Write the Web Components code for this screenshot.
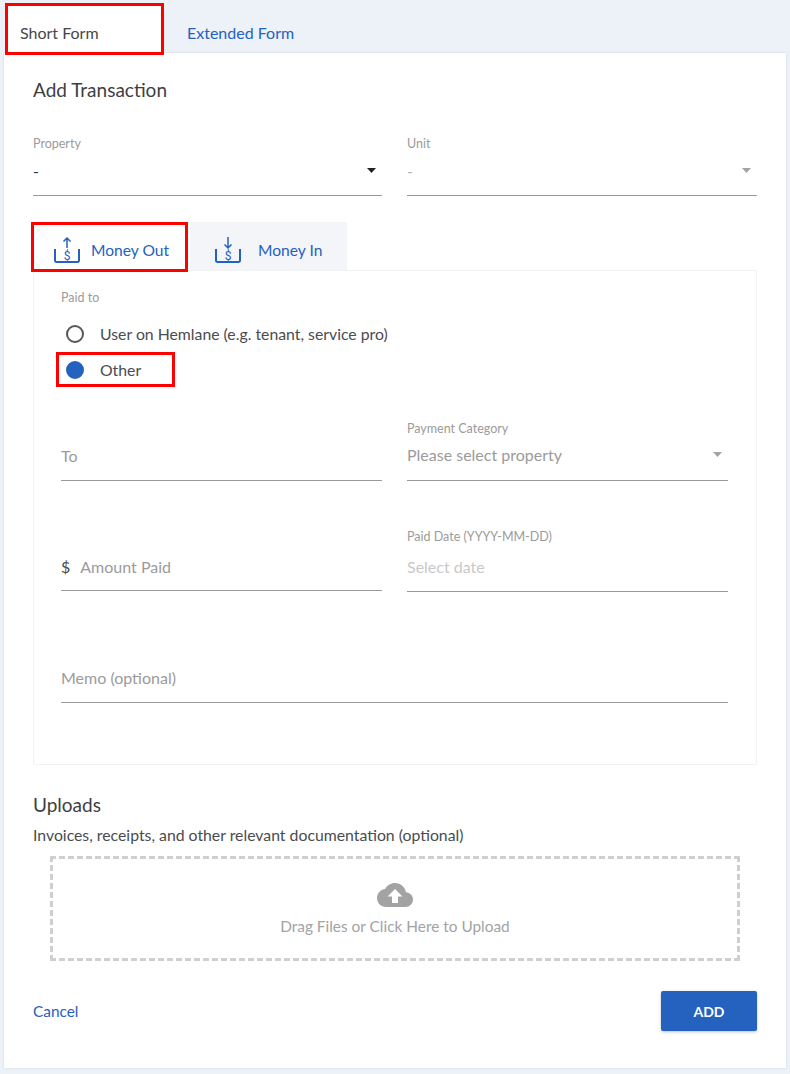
<!DOCTYPE html>
<html>
<head>
<meta charset="utf-8">
<title>Add Transaction</title>
<style>
  html, body { margin: 0; height: 100%; }
  body { background: #edf1f8; font-family: "Lato", "Liberation Sans", sans-serif; color: #3d3f42; overflow: hidden; }
</style>
</head>
<body>
<form-tabs></form-tabs>
<transaction-card>
  <h-title slot="title">Add Transaction</h-title>
  <div slot="top">
    <form-field label="Property" value="-" arrow="dark"></form-field>
    <form-field label="Unit" value="-" arrow="light" disabled></form-field>
  </div>
  <money-tabs slot="tabs"></money-tabs>
  <money-panel slot="panel"></money-panel>
  <upload-zone slot="uploads"></upload-zone>
  <form-actions slot="actions"></form-actions>
</transaction-card>

<script>
const FONT = '"Lato", "Liberation Sans", sans-serif';

class HTitle extends HTMLElement {
  constructor() {
    super();
    this.attachShadow({ mode: 'open' }).innerHTML = `
      <style>:host { display: block; font: 19px/24px ${FONT}; color: #3d3f42; }</style><slot></slot>`;
  }
}

class FormTabs extends HTMLElement {
  constructor() {
    super();
    this.attachShadow({ mode: 'open' }).innerHTML = `
      <style>
        :host { display: flex; height: 53px; padding: 6px 0 0 8px; box-sizing: border-box; position: relative; z-index: 1; }
        .tab { width: 153px; padding: 16px 0 0 12px; box-sizing: border-box; font-size: 16px; line-height: 22px; }
        .active { background: #fff; color: #45474a; outline: 3px solid #f00; height: 46px; }
        .link { color: #2561bf; padding-left: 26px; }
      </style>
      <div class="tab active">Short Form</div>
      <div class="tab link">Extended Form</div>`;
  }
}

class TransactionCard extends HTMLElement {
  constructor() {
    super();
    this.attachShadow({ mode: 'open' }).innerHTML = `
      <style>
        :host { display: block; margin: 0 4px; height: 1015px; background: #fff; box-sizing: border-box; padding: 25px 29px 0; box-shadow: 0 0 2px rgba(60,80,120,.18); }
        ::slotted([slot=top]) { display: grid; grid-template-columns: 349px 350px; column-gap: 25px; margin-top: 34px; }
        ::slotted([slot=tabs]) { margin-top: 26px; }
      </style>
      <slot name="title"></slot>
      <slot name="top"></slot>
      <slot name="tabs"></slot>
      <slot name="panel"></slot>
      <slot name="uploads"></slot>
      <slot name="actions"></slot>`;
  }
}

class FormField extends HTMLElement {
  connectedCallback() {
    if (this.shadowRoot) return;
    const label = this.getAttribute('label') || '';
    const value = this.getAttribute('value') || '';
    const placeholder = this.getAttribute('placeholder') || '';
    const arrow = this.getAttribute('arrow');
    const prefix = this.getAttribute('prefix');
    const valueColor = this.hasAttribute('disabled') ? '#b5b5b5' : '#333';
    const arrowColor = arrow === 'dark' ? '#222' : '#a3a3a3';
    this.attachShadow({ mode: 'open' }).innerHTML = `
      <style>
        :host { display: block; font-family: ${FONT}; }
        .label { font-size: 12.5px; line-height: 16px; height: 16px; color: #9b9b9b; }
        .box { height: var(--box-h, 35px); margin-top: 9px; border-bottom: 1px solid #9a9a9a; display: flex; align-items: flex-end; padding-bottom: var(--box-pb, 13px); box-sizing: border-box; font-size: 16px; line-height: 22px; }
        .value { color: ${valueColor}; }
        .ph { color: #9b9b9b; }
        .ph.pale { color: #c8c8c8; }
        .prefix { color: #4a4a4a; margin-right: 10px; }
        svg { margin: 0 6px 9px auto; }
      </style>
      <div class="label">${label}</div>
      <div class="box">
        ${prefix ? `<span class="prefix">${prefix}</span>` : ''}
        ${value ? `<span class="value">${value}</span>` : ''}
        ${placeholder ? `<span class="ph ${this.hasAttribute('pale') ? 'pale' : ''}">${placeholder}</span>` : ''}
        ${arrow ? `<svg width="9" height="5" viewBox="0 0 9 5"><path d="M0 0h9L4.500 5z" fill="${arrowColor}"/></svg>` : ''}
      </div>`;
  }
}

const trayIcon = dir => `
  <svg width="26" height="26" viewBox="0 0 26 26" fill="none" stroke="#2561bf">
    <path d="M1 12v11.500a1.500 1.500 0 0 0 1.500 1.500h21a1.500 1.500 0 0 0 1.500-1.500V12" stroke-width="2"/>
    ${dir === 'up'
      ? '<path d="M13 11V1M9.500 4.500L13 1l3.500 3.500" stroke-width="1.500"/>'
      : '<path d="M13 0v11M9.500 7.500L13 11l3.500-3.500" stroke-width="1.500"/>'}
    <text x="13" y="22.500" font-size="12" font-family="Roboto, sans-serif" fill="#2561bf" stroke="none" text-anchor="middle">$</text>
  </svg>`;

class MoneyTabs extends HTMLElement {
  constructor() {
    super();
    this.attachShadow({ mode: 'open' }).innerHTML = `
      <style>
        :host { display: flex; height: 48px; font: 15.6px/22px ${FONT}; color: #2561bf; }
        .tab { width: 157px; box-sizing: border-box; display: flex; align-items: center; gap: 11px; padding: 8px 0 0 21px; }
        .out { width: 154px; position: relative; background: #fff; }
        .out::after { content: ""; position: absolute; inset: 0 -1px -2px -2px; border: 3px solid #f00; }
        .in { background: #f3f5f8; margin-left: 3px; padding-left: 25px; gap: 17px; }
      </style>
      <div class="tab out">${trayIcon('up')}<span>Money Out</span></div>
      <div class="tab in">${trayIcon('down')}<span>Money In</span></div>`;
  }
}

class RadioOption extends HTMLElement {
  connectedCallback() {
    if (this.shadowRoot) return;
    const checked = this.hasAttribute('checked');
    this.attachShadow({ mode: 'open' }).innerHTML = `
      <style>
        :host { display: flex; align-items: center; height: 36px; font: 15.8px/22px ${FONT}; color: #4a4c4f; }
        .dot { width: 18px; height: 18px; border-radius: 50%; box-sizing: border-box; margin: 0 16px 0 5px; border: 2px solid #55575a; flex: none; }
        .on { background: #2561bf; border-color: #2561bf; }
      </style>
      <span class="dot ${checked ? 'on' : ''}"></span><slot></slot>`;
  }
}

class MoneyPanel extends HTMLElement {
  constructor() {
    super();
    this.attachShadow({ mode: 'open' }).innerHTML = `
      <style>
        :host { display: block; height: 495px; box-sizing: border-box; border: 1px solid #f1f2f4; padding: 19px 27px 0; font-family: ${FONT}; }
        .cap { font-size: 12.5px; line-height: 16px; color: #9b9b9b; }
        .radios { margin-top: 10px; }
        .sel { display: flex; align-items: center; box-sizing: border-box; outline: 3px solid #f00; width: 113px; height: 29px; margin: 3px 0 0 -2px; padding-left: 2px; }
        .grid { display: grid; grid-template-columns: 321px 321px; column-gap: 25px; margin-top: 37px; row-gap: 48px; }
        .memo { grid-column: 1 / 3; margin-top: 3px; }
        .row2 { --box-h: 38px; }
        .amount { margin: -1px 0 1px; --box-pb: 12px; }
      </style>
      <div class="cap">Paid to</div>
      <div class="radios">
        <radio-option>User on Hemlane (e.g. tenant, service pro)</radio-option>
        <div class="sel"><radio-option checked>Other</radio-option></div>
      </div>
      <div class="grid">
        <form-field placeholder="To"></form-field>
        <form-field label="Payment Category" placeholder="Please select property" arrow="light" style="--box-pb: 14px"></form-field>
        <form-field class="row2 amount" prefix="$" placeholder="Amount Paid"></form-field>
        <form-field class="row2" label="Paid Date (YYYY-MM-DD)" placeholder="Select date" pale></form-field>
        <form-field class="memo" placeholder="Memo (optional)"></form-field>
      </div>`;
  }
}

class UploadZone extends HTMLElement {
  constructor() {
    super();
    this.attachShadow({ mode: 'open' }).innerHTML = `
      <style>
        :host { display: block; margin-top: 28px; font-family: ${FONT}; }
        h3 { margin: 0; font-weight: 400; font-size: 19px; line-height: 24px; color: #3d3f42; }
        p { margin: 8px 0 0; font-size: 15.8px; line-height: 20px; color: #4a4c4f; }
        .zone { margin: 11px 17px 0; height: 105px; box-sizing: border-box; border: 3px dashed #cfcfcf; display: flex; flex-direction: column; align-items: center; padding-top: 24px; color: #a3a3a3; font-size: 15.4px; }
        .zone span { line-height: 22px; margin-top: 8px; }
      </style>
      <h3>Uploads</h3>
      <p>Invoices, receipts, and other relevant documentation (optional)</p>
      <div class="zone">
        <svg width="36" height="24" viewBox="0 0 36 24"><path fill="#a3a3a3" d="M29 9.200C28 4 23.500 0 18 0c-4.300 0-8.100 2.500-9.900 6C3.600 6.500 0 10.300 0 15c0 5 4 9 9 9h19.500c4.100 0 7.500-3.400 7.500-7.500 0-3.900-3.100-7-7-7.300z"/><path fill="#fff" d="M18 6l-7.500 7.500H15V20h6v-6.500h4.500z"/></svg>
        <span>Drag Files or Click Here to Upload</span>
      </div>`;
  }
}

class FormActions extends HTMLElement {
  constructor() {
    super();
    this.attachShadow({ mode: 'open' }).innerHTML = `
      <style>
        :host { display: flex; justify-content: space-between; align-items: center; margin-top: 30px; font: 15.4px/22px ${FONT}; }
        a { color: #2561bf; }
        button { width: 96px; height: 40px; border: 0; border-radius: 2px; background: #2561bf; color: #fff; font: 700 14px ${FONT}; box-shadow: 0 1px 3px rgba(0,0,0,.25); }
      </style>
      <a>Cancel</a><button>ADD</button>`;
  }
}

customElements.define('h-title', HTitle);
customElements.define('form-tabs', FormTabs);
customElements.define('transaction-card', TransactionCard);
customElements.define('form-field', FormField);
customElements.define('money-tabs', MoneyTabs);
customElements.define('radio-option', RadioOption);
customElements.define('money-panel', MoneyPanel);
customElements.define('upload-zone', UploadZone);
customElements.define('form-actions', FormActions);
</script>
</body>
</html>
